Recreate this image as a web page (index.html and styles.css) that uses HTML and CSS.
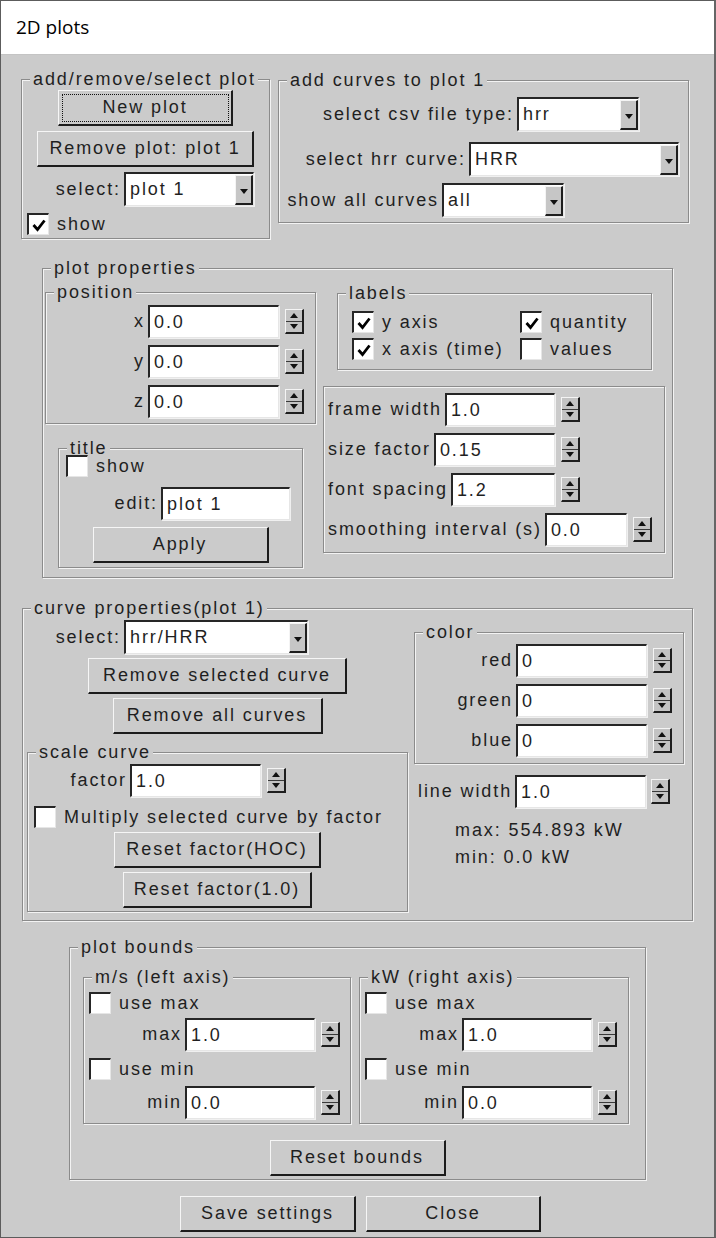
FILE: index.html
```html
<!DOCTYPE html>
<html>
<head>
<meta charset="utf-8">
<title>2D plots</title>
<link rel="stylesheet" href="styles.css">
</head>
<body>
<div class="window">
  <div class="titlebar">2D plots</div>
  <div class="client">

    <div class="row1">
      <div class="grp pa">
        <div class="lbl">add/remove/select plot</div>
        <div class="btn focus pa-new">New plot</div>
        <div class="btn pa-rem">Remove plot: plot 1</div>
        <div class="fr pa-sel"><span class="tl">select:</span><div class="dd w130"><span>plot 1</span><b></b></div></div>
        <div class="ck pa-show"><span class="cb"><svg width="16" height="16" viewBox="0 0 16 16"><path d="M2.5 8 L6.5 12.5 L13.5 3.5" fill="none" stroke="#000" stroke-width="2.8"/></svg></span><span>show</span></div>
      </div>

      <div class="grp pb">
        <div class="lbl">add curves to plot 1</div>
        <div class="fr pb-r1"><span class="tl">select csv file type:</span><div class="dd w122"><span>hrr</span><b></b></div></div>
        <div class="fr pb-r2"><span class="tl">select hrr curve:</span><div class="dd w210"><span>HRR</span><b></b></div></div>
        <div class="fr pb-r3"><span class="tl">show all curves</span><div class="dd w122"><span>all</span><b></b></div></div>
      </div>
    </div>

    <div class="grp pp">
      <div class="lbl">plot properties</div>
      <div class="pp-body">
        <div class="ppl">
          <div class="grp pos">
            <div class="lbl">position</div>
            <div class="fr pos-row"><span class="tl">x</span><div class="fld w131">0.0</div><div class="spin"><i></i><i></i></div></div>
            <div class="fr pos-row"><span class="tl">y</span><div class="fld w131">0.0</div><div class="spin"><i></i><i></i></div></div>
            <div class="fr pos-row"><span class="tl">z</span><div class="fld w131">0.0</div><div class="spin"><i></i><i></i></div></div>
          </div>
          <div class="grp ttl">
            <div class="lbl">title</div>
            <div class="ck ttl-show"><span class="cb"></span><span>show</span></div>
            <div class="fr ttl-edit"><span class="tl">edit:</span><div class="fld w129">plot 1</div></div>
            <div class="btn ttl-apply">Apply</div>
          </div>
        </div>
        <div class="ppr">
          <div class="grp labels">
            <div class="lbl">labels</div>
            <div class="lgrid">
              <div class="ck"><span class="cb"><svg width="16" height="16" viewBox="0 0 16 16"><path d="M2.5 8 L6.5 12.5 L13.5 3.5" fill="none" stroke="#000" stroke-width="2.8"/></svg></span><span>y axis</span></div>
              <div class="ck"><span class="cb"><svg width="16" height="16" viewBox="0 0 16 16"><path d="M2.5 8 L6.5 12.5 L13.5 3.5" fill="none" stroke="#000" stroke-width="2.8"/></svg></span><span>quantity</span></div>
              <div class="ck"><span class="cb"><svg width="16" height="16" viewBox="0 0 16 16"><path d="M2.5 8 L6.5 12.5 L13.5 3.5" fill="none" stroke="#000" stroke-width="2.8"/></svg></span><span>x axis (time)</span></div>
              <div class="ck"><span class="cb"></span><span>values</span></div>
            </div>
          </div>
          <div class="grp frame">
            <div class="fl"><div class="lf w227"><span class="tl">frame width</span><div class="fld">1.0</div></div><div class="spin"><i></i><i></i></div></div>
            <div class="fl"><div class="lf w227"><span class="tl">size factor</span><div class="fld">0.15</div></div><div class="spin"><i></i><i></i></div></div>
            <div class="fl"><div class="lf w227"><span class="tl">font spacing</span><div class="fld">1.2</div></div><div class="spin"><i></i><i></i></div></div>
            <div class="fl"><div class="lf w299"><span class="tl">smoothing interval (s)</span><div class="fld">0.0</div></div><div class="spin"><i></i><i></i></div></div>
          </div>
        </div>
      </div>
    </div>

    <div class="grp cp">
      <div class="lbl">curve properties(plot 1)</div>
      <div class="cp-body">
        <div class="cpl">
          <div class="fr cp-sel"><span class="tl">select:</span><div class="dd w184"><span>hrr/HRR</span><b></b></div></div>
          <div class="btn cp-b1">Remove selected curve</div>
          <div class="btn cp-b2">Remove all curves</div>
          <div class="grp scale">
            <div class="lbl">scale curve</div>
            <div class="fr sc-factor"><span class="tl">factor</span><div class="fld w131">1.0</div><div class="spin"><i></i><i></i></div></div>
            <div class="ck sc-mult"><span class="cb"></span><span>Multiply selected curve by factor</span></div>
            <div class="btn sc-b1">Reset factor(HOC)</div>
            <div class="btn sc-b2">Reset factor(1.0)</div>
          </div>
        </div>
        <div class="cpr">
          <div class="grp color">
            <div class="lbl">color</div>
            <div class="fr col-row"><span class="tl">red</span><div class="fld w131">0</div><div class="spin"><i></i><i></i></div></div>
            <div class="fr col-row"><span class="tl">green</span><div class="fld w131">0</div><div class="spin"><i></i><i></i></div></div>
            <div class="fr col-row"><span class="tl">blue</span><div class="fld w131">0</div><div class="spin"><i></i><i></i></div></div>
          </div>
          <div class="fl lw"><div class="lf w228"><span class="tl">line width</span><div class="fld">1.0</div></div><div class="spin"><i></i><i></i></div></div>
          <div class="stats">
            <div>max: 554.893 kW</div>
            <div>min: 0.0 kW</div>
          </div>
        </div>
      </div>
    </div>

    <div class="grp pbd">
      <div class="lbl">plot bounds</div>
      <div class="pbd-body">
        <div class="grp ax axl">
          <div class="lbl">m/s (left axis)</div>
          <div class="ck ax-c1"><span class="cb"></span><span>use max</span></div>
          <div class="fr ax-r1"><span class="tl">max</span><div class="fld w130">1.0</div><div class="spin"><i></i><i></i></div></div>
          <div class="ck ax-c2"><span class="cb"></span><span>use min</span></div>
          <div class="fr ax-r2"><span class="tl">min</span><div class="fld w130">0.0</div><div class="spin"><i></i><i></i></div></div>
        </div>
        <div class="grp ax axr">
          <div class="lbl">kW (right axis)</div>
          <div class="ck ax-c1"><span class="cb"></span><span>use max</span></div>
          <div class="fr ax-r1"><span class="tl">max</span><div class="fld w130">1.0</div><div class="spin"><i></i><i></i></div></div>
          <div class="ck ax-c2"><span class="cb"></span><span>use min</span></div>
          <div class="fr ax-r2"><span class="tl">min</span><div class="fld w130">0.0</div><div class="spin"><i></i><i></i></div></div>
        </div>
      </div>
      <div class="btn pbd-reset">Reset bounds</div>
    </div>

    <div class="bottom">
      <div class="btn bt-save">Save settings</div>
      <div class="btn bt-close">Close</div>
    </div>

  </div>
</div>
</body>
</html>
```

FILE: styles.css
```css
* { box-sizing: border-box; }
html, body { margin: 0; padding: 0; }
body {
  width: 716px; height: 1238px; overflow: hidden;
  font-family: "Liberation Sans", Arial, Helvetica, sans-serif;
  font-size: 18px; letter-spacing: 1.9px; color: #1f1f1f;
  background: #cbcbcb;
}
.window {
  width: 716px; height: 1238px;
  border: 1px solid #5c5c5c; border-right: 2px solid #666;
  display: flex; flex-direction: column; background: #cbcbcb;
}
.titlebar {
  flex: none; height: 54px; background: #fff; border-bottom: 1px solid #c4c4c4;
  padding: 0 0 2px 15px; display: flex; align-items: center;
  font-family: "Open Sans", "Noto Sans", sans-serif; font-size: 19px; letter-spacing: 0; color: #000;
}
.client { flex: 1; display: flex; flex-direction: column; align-items: flex-start; }

/* etched group */
.grp {
  flex: none; border: 1px solid #8b8b8b;
  box-shadow: inset 1px 1px 0 #f3f3f3, 1px 1px 0 #f3f3f3;
  display: flex; flex-direction: column; align-items: stretch;
}
.lbl {
  align-self: flex-start; height: 20px; line-height: 20px;
  margin: -11px 0 0 8px; padding: 0 2px 0 3px;
  background: #cbcbcb; white-space: nowrap;
}

/* button */
.btn {
  flex: none; align-self: center; height: 36px;
  display: flex; align-items: center; justify-content: center;
  background: #cbcbcb; border-style: solid; border-width: 1px 2px 2px 1px;
  border-color: #f6f6f6 #1c1c1c #1c1c1c #f6f6f6; white-space: nowrap; padding-bottom: 1px;
}
.focus { outline: 1px dotted #111; outline-offset: -5px; }

/* text field */
.fld {
  flex: none; height: 33px; background: #fff; border-style: solid; border-width: 2px 1px 1px 2px;
  border-color: #262626 #e6e6e6 #e6e6e6 #262626; box-shadow: 1px 1px 0 #f0f0f0;
  padding-left: 4px; display: flex; align-items: center; white-space: nowrap; overflow: hidden;
}
.w129 { width: 129px; } .w130 { width: 130px; } .w131 { width: 131px; }

/* spinner */
.spin {
  flex: none; width: 19px; height: 25px; margin-left: 6px;
  display: flex; flex-direction: column; background: #c3c3c3;
  border-style: solid; border-width: 1px 2px 2px 1px;
  border-color: #f4f4f4 #1e1e1e #1e1e1e #f4f4f4;
}
.spin i { flex: 1; display: flex; align-items: center; justify-content: center; }
.spin i + i { border-top: 1px solid #3a3a3a; }
.spin i::before {
  content: ""; border-left: 4px solid transparent; border-right: 4px solid transparent;
  border-bottom: 5px solid #111;
}
.spin i + i::before { border-bottom: 0; border-top: 5px solid #111; }

/* dropdown */
.dd {
  flex: none; height: 34px; display: flex; background: #fff;
  border-style: solid; border-width: 2px 1px 1px 2px;
  border-color: #262626 #e6e6e6 #e6e6e6 #262626; box-shadow: 1px 1px 0 #f0f0f0;
}
.dd > span { flex: 1; padding-left: 4px; display: flex; align-items: center; white-space: nowrap; overflow: hidden; }
.dd > b {
  flex: none; width: 18px; margin-top: 1px; background: #c6c6c6;
  border-style: solid; border-width: 1px 2px 2px 1px;
  border-color: #f4f4f4 #1e1e1e #1e1e1e #f4f4f4;
  display: flex; align-items: center; justify-content: center; padding-top: 3px;
}
.dd > b::before {
  content: ""; border-left: 4px solid transparent; border-right: 4px solid transparent;
  border-top: 5px solid #111;
}
.w122 { width: 122px; } .w184 { width: 184px; } .w210 { width: 210px; }

/* checkbox */
.cb {
  flex: none; width: 22px; height: 22px; background: #fff;
  border-style: solid; border-width: 2px 1px 1px 2px;
  border-color: #262626 #e6e6e6 #e6e6e6 #262626;
  display: flex; align-items: center; justify-content: center;
}
.cb svg { display: block; }
.ck { display: flex; align-items: center; white-space: nowrap; align-self: flex-start; }
.ck .cb { margin-right: 8px; }

/* label rows */
.fr { display: flex; align-items: center; justify-content: flex-end; white-space: nowrap; }
.fr .tl { margin-right: 3px; }
.fl { display: flex; align-items: center; white-space: nowrap; }
.lf { display: flex; align-items: center; }
.lf .tl { margin-right: 3px; }
.lf .fld { flex: 1; }
.w227 { width: 227px; } .w228 { width: 228px; } .w299 { width: 299px; }

/* row 1 */
.row1 { display: flex; align-items: flex-start; margin: 24px 0 0 20px; }
.pa { width: 249px; height: 160px; }
.pa-new { width: 175px; margin-top: 1px; }
.pa-rem { width: 217px; margin-top: 5px; }
.pa-sel { margin-top: 5px; padding-right: 15px; }
.pa-show { margin: 7px 0 0 5px; }

.pb { width: 411px; height: 143px; margin: 1px 0 0 8px; }
.pb-r1 { margin-top: 7px; padding-right: 49px; }
.pb-r2 { margin-top: 11px; padding-right: 9px; }
.pb-r3 { margin-top: 7px; padding-right: 124px; }

/* plot properties */
.pp { width: 631px; height: 310px; margin: 29px 0 0 41px; }
.pp-body { display: flex; align-items: flex-start; margin-top: 14px; }
.ppl { margin-left: 2px; width: 271px; display: flex; flex-direction: column; align-items: flex-start; }
.pos { width: 271px; height: 132px; }
.pos-row { margin-top: 7px; padding-right: 11px; }
.pos-row:nth-child(2) { margin-top: 3px; }
.ttl { width: 245px; height: 120px; margin: 24px 0 0 13px; }
.ttl-show { margin: -3px 0 0 7px; }
.ttl-edit { margin-top: 10px; padding-right: 12px; }
.ttl-apply { width: 176px; margin-top: 7px; }

.ppr { margin-left: 7px; width: 342px; display: flex; flex-direction: column; align-items: flex-start; }
.labels { width: 315px; height: 77px; margin: 1px 0 0 14px; }
.lgrid { display: grid; grid-template-columns: 168px auto; row-gap: 5px; margin: 8px 0 0 14px; }
.frame { width: 342px; height: 167px; margin-top: 16px; padding: 6px 0 0 4px; }
.frame .fl + .fl { margin-top: 7px; }

/* curve properties */
.cp { width: 671px; height: 313px; margin: 30px 0 0 21px; }
.cp-body { display: flex; align-items: flex-start; }
.cpl { margin-left: 4px; width: 381px; display: flex; flex-direction: column; align-items: stretch; }
.cp-sel { margin-top: 2px; padding-right: 100px; }
.cp-b1 { width: 259px; margin-top: 4px; }
.cp-b2 { width: 210px; margin-top: 4px; }
.scale { width: 381px; height: 160px; margin-top: 18px; }
.sc-factor { margin-top: 2px; padding-right: 121px; }
.sc-mult { margin: 9px 0 0 6px; }
.sc-b1 { width: 207px; margin-top: 4px; }
.sc-b2 { width: 189px; margin-top: 4px; }

.cpr { margin-left: 6px; width: 270px; display: flex; flex-direction: column; align-items: flex-start; }
.color { width: 270px; height: 132px; margin-top: 14px; }
.col-row { margin-top: 7px; padding-right: 11px; }
.col-row:nth-child(2) { margin-top: 2px; }
.lw { margin: 11px 0 0 4px; }
.lw .spin { margin-left: 5px; }
.stats { margin: 9px 0 0 41px; line-height: 27px; white-space: nowrap; }

/* plot bounds */
.pbd { width: 577px; height: 233px; margin: 26px 0 0 68px; }
.pbd-body { display: flex; align-items: flex-start; margin: 20px 0 0 13px; }
.ax { height: 147px; }
.axl { width: 268px; }
.axr { width: 270px; margin-left: 8px; }
.ax-c1 { margin: 5px 0 0 5px; }
.ax-r1 { margin-top: 4px; padding-right: 10px; }
.ax-c2 { margin: 7px 0 0 5px; }
.ax-r2 { margin-top: 6px; padding-right: 10px; }
.axr .ax-r1, .axr .ax-r2 { padding-right: 11px; }
.pbd-reset { width: 176px; margin-top: 16px; }

/* bottom */
.bottom { display: flex; align-items: center; gap: 10px; margin: 16px 0 0 179px; }
.bt-save { width: 176px; }
.bt-close { width: 175px; }
```
